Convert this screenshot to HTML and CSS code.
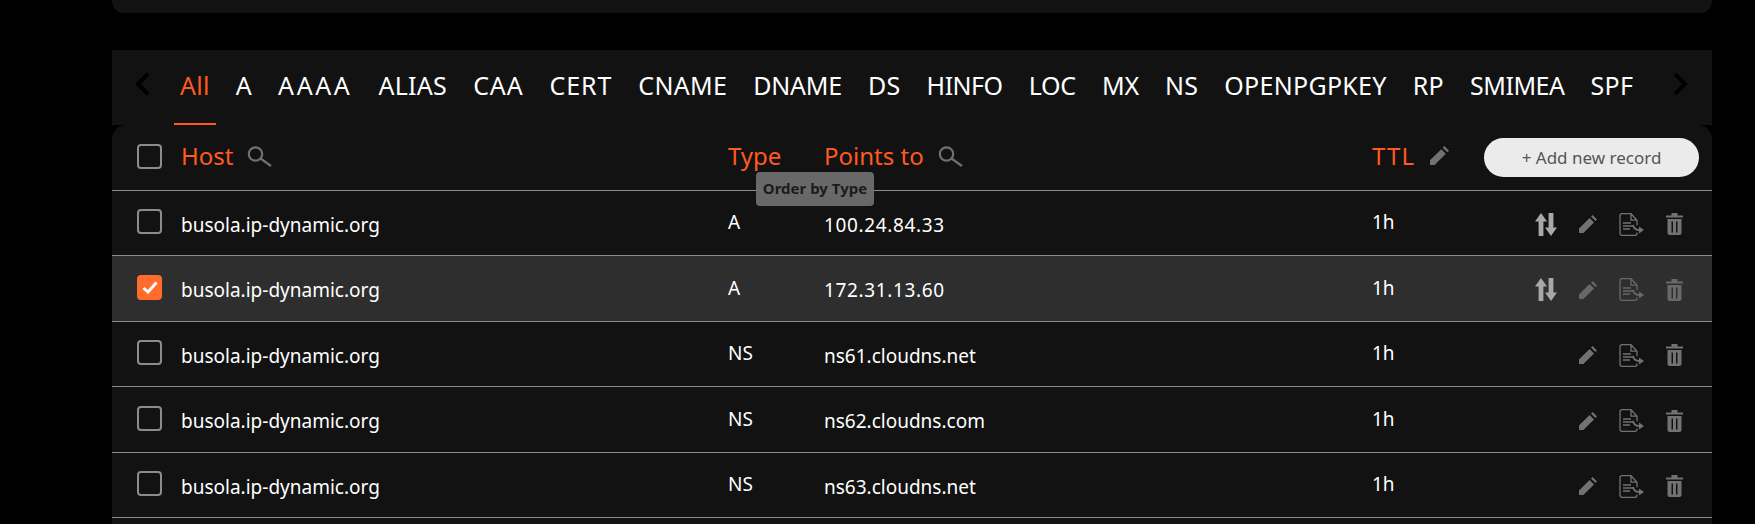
FILE: index.html
```html
<!DOCTYPE html>
<html lang="en">
<head>
<meta charset="utf-8">
<title>DNS records</title>
<link rel="stylesheet" href="styles.css">
</head>
<body>
<svg class="defs" width="0" height="0" aria-hidden="true">
  <defs>
    <symbol id="i-search" viewBox="0 0 25 21"><circle cx="8.5" cy="8" r="6.7" fill="none" stroke="currentColor" stroke-width="2.2"/><path d="M13.5 12.5 24 20" fill="none" stroke="currentColor" stroke-width="2.2"/></symbol>
    <symbol id="i-pencil" viewBox="0 0 18 18"><path d="M0 18V13.6L10.6 3l4.4 4.4L4.4 18Z" fill="currentColor"/><path d="M12 1.6 13.6 0 18 4.4l-1.6 1.6Z" fill="currentColor"/></symbol>
    <symbol id="i-swap" viewBox="0 0 22 23"><path d="M6 0l6 8.500H8.400V23H3.600V8.500H0Z" fill="currentColor"/><path d="M16 23l-6-8.500h3.600V0h4.800v14.500H22Z" fill="currentColor"/></symbol>
    <symbol id="i-doc" viewBox="0 0 25 23"><path d="M3 .7h9l6 6.500v5M18 19.500v.800a2 2 0 0 1-2 2H3a2 2 0 0 1-2-2V2.700a2 2 0 0 1 2-2M12 .7v6.500h6" fill="none" stroke="currentColor" stroke-width="1.300"/><path d="M4 10h8M4 13h10M4 16h7" stroke="currentColor" stroke-width="1.300"/><path d="M14 12c1 4 3 5 6 5" fill="none" stroke="currentColor" stroke-width="1.800"/><path d="M20 13.500 25 17l-5 3.500Z" fill="currentColor"/></symbol>
    <symbol id="i-trash" viewBox="0 0 17 22"><path d="M0 2.500h5.500V0h6v2.500H17v2H0Z" fill="currentColor"/><path fill-rule="evenodd" d="M1.500 6h14v14a2 2 0 0 1-2 2h-10a2 2 0 0 1-2-2ZM5.500 8.500v11h1.500v-11ZM10 8.500v11h1.500v-11Z" fill="currentColor"/></symbol>
    <symbol id="i-left" viewBox="0 0 16 24"><path d="M14 2 4 12l10 10" fill="none" stroke="currentColor" stroke-width="4"/></symbol>
    <symbol id="i-right" viewBox="0 0 16 24"><path d="M2 2l10 10L2 22" fill="none" stroke="currentColor" stroke-width="4"/></symbol>
    <symbol id="i-check" viewBox="0 0 16 13"><path d="M1.500 7 6 11 14.500 1.500" fill="none" stroke="currentColor" stroke-width="3"/></symbol>
  </defs>
</svg>

<div class="page">
  <div class="top-card"></div>

  <nav class="tabs">
    <svg class="chev"><use href="#i-left"/></svg>
    <div class="tab-list">
      <a class="tab active">All</a>
      <a class="tab">A</a>
      <a class="tab tab-wide">AAAA</a>
      <a class="tab">ALIAS</a>
      <a class="tab tab-loose">CAA</a>
      <a class="tab tab-loose">CERT</a>
      <a class="tab">CNAME</a>
      <a class="tab tab-tight">DNAME</a>
      <a class="tab">DS</a>
      <a class="tab tab-tighter">HINFO</a>
      <a class="tab tab-tight">LOC</a>
      <a class="tab tab-tight">MX</a>
      <a class="tab">NS</a>
      <a class="tab">OPENPGPKEY</a>
      <a class="tab">RP</a>
      <a class="tab tab-tighter">SMIMEA</a>
      <a class="tab">SPF</a>
    </div>
    <svg class="chev chev-right"><use href="#i-right"/></svg>
  </nav>

  <section class="table">
    <div class="row head">
      <span class="cell-check"><span class="box"></span></span>
      <span class="th">Host <svg class="ic-search"><use href="#i-search"/></svg></span>
      <span class="th">Type</span>
      <span class="th">Points to <svg class="ic-search"><use href="#i-search"/></svg></span>
      <span class="th ttl">TTL <svg class="ic-pen head-pen"><use href="#i-pencil"/></svg></span>
      <span class="cell-actions"><button class="add">+ Add new record</button></span>
    </div>

    <div class="row">
      <span class="cell-check"><span class="box"></span></span>
      <span class="val">busola.ip-dynamic.org</span><span class="raised">A</span><span class="val ip">100.24.84.33</span><span class="raised">1h</span>
      <span class="cell-actions icons"><svg class="ic-swap"><use href="#i-swap"/></svg><svg class="ic-pen"><use href="#i-pencil"/></svg><svg class="ic-doc"><use href="#i-doc"/></svg><svg class="ic-trash"><use href="#i-trash"/></svg></span>
    </div>
    <div class="row selected">
      <span class="cell-check"><span class="box on"><svg class="ic-check"><use href="#i-check"/></svg></span></span>
      <span class="val">busola.ip-dynamic.org</span><span class="raised">A</span><span class="val ip">172.31.13.60</span><span class="raised">1h</span>
      <span class="cell-actions icons"><svg class="ic-swap"><use href="#i-swap"/></svg><svg class="ic-pen"><use href="#i-pencil"/></svg><svg class="ic-doc"><use href="#i-doc"/></svg><svg class="ic-trash"><use href="#i-trash"/></svg></span>
    </div>
    <div class="row">
      <span class="cell-check"><span class="box"></span></span>
      <span class="val">busola.ip-dynamic.org</span><span class="raised">NS</span><span class="val">ns61.cloudns.net</span><span class="raised">1h</span>
      <span class="cell-actions icons"><svg class="ic-pen"><use href="#i-pencil"/></svg><svg class="ic-doc"><use href="#i-doc"/></svg><svg class="ic-trash"><use href="#i-trash"/></svg></span>
    </div>
    <div class="row">
      <span class="cell-check"><span class="box"></span></span>
      <span class="val">busola.ip-dynamic.org</span><span class="raised">NS</span><span class="val">ns62.cloudns.com</span><span class="raised">1h</span>
      <span class="cell-actions icons"><svg class="ic-pen"><use href="#i-pencil"/></svg><svg class="ic-doc"><use href="#i-doc"/></svg><svg class="ic-trash"><use href="#i-trash"/></svg></span>
    </div>
    <div class="row">
      <span class="cell-check"><span class="box"></span></span>
      <span class="val">busola.ip-dynamic.org</span><span class="raised">NS</span><span class="val">ns63.cloudns.net</span><span class="raised">1h</span>
      <span class="cell-actions icons"><svg class="ic-pen"><use href="#i-pencil"/></svg><svg class="ic-doc"><use href="#i-doc"/></svg><svg class="ic-trash"><use href="#i-trash"/></svg></span>
    </div>
    <div class="row tail"></div>

    <div class="tooltip">Order by Type</div>
  </section>
</div>
</body>
</html>
```

FILE: styles.css
```css
* { box-sizing: border-box; }

html, body {
  margin: 0;
  height: 524px;
  overflow: hidden;
  background: #000;
}

body {
  font-family: "Noto Sans", "Open Sans", sans-serif;
  color: #fff;
}

.defs { display: block; height: 0; }

.page {
  width: 1600px;
  margin-left: 112px;
}

.top-card {
  height: 13px;
  background: #121212;
  border-radius: 0 0 12px 12px;
}

.tabs {
  height: 75px;
  margin-top: 37px;
  background: #121212;
  display: flex;
  position: relative;
  padding-left: 22px;
  align-items: flex-start;
}

.chev {
  width: 16px;
  height: 24px;
  margin-top: 22px;
  color: #000;
  flex: none;
}

.chev-right {
  position: absolute;
  left: 1561px;
  top: 0;
}

.tab-list {
  display: flex;
  gap: 26px;
  margin-left: 30px;
}

.tab {
  height: 75px;
  font-size: 25px;
  letter-spacing: 0.3px;
  line-height: 70px;
  position: relative;
  white-space: nowrap;
}

.tab-wide { letter-spacing: 2.6px; }
.tab-loose { letter-spacing: 0.9px; }
.tab-tight { letter-spacing: -0.2px; }
.tab-tighter { letter-spacing: -0.5px; }

.tab.active {
  color: #ff5a1f;
}

.tab.active::after {
  content: "";
  position: absolute;
  left: -6px;
  right: -6px;
  bottom: 0;
  height: 2px;
  background: #ff5a1f;
}

.table {
  position: relative;
  background: #121212;
  border-radius: 14px 14px 0 0;
  height: 420px;
}

.row {
  display: grid;
  grid-template-columns: 69px 547px 96px 548px 112px 228px;
  align-items: center;
  height: 65.5px;
  border-bottom: 1px solid #8a8a8a;
  font-size: 19px;
}

.row.selected {
  background: #2e2e2e;
}

.row.tail {
  border-bottom: 0;
}

.val {
  padding-top: 4px;
}

.ip {
  letter-spacing: 0.65px;
}

.raised {
  padding-bottom: 1px;
}

.cell-check {
  padding-left: 25px;
  padding-bottom: 2px;
  display: flex;
}

.box {
  width: 25px;
  height: 25px;
  border: 2px solid #8c8c8c;
  border-radius: 4px;
  display: flex;
  align-items: center;
  justify-content: center;
}

.box.on {
  background: #ff6c2c;
  border-color: #ff6c2c;
}

.ic-check {
  width: 16px;
  height: 13px;
  color: #fff;
}

.th {
  color: #ff5a1f;
  font-size: 24px;
  display: flex;
  align-items: center;
  gap: 14px;
  padding-bottom: 4px;
  white-space: nowrap;
}

.ttl {
  letter-spacing: 1.2px;
}

.ic-search {
  width: 25px;
  height: 21px;
  color: #707070;
  margin-top: 3px;
}

.ic-pen {
  width: 18px;
  height: 18px;
  color: #727272;
}

.head-pen {
  width: 19px;
  height: 19px;
  margin-left: 1px;
}

.cell-actions {
  display: flex;
  justify-content: flex-end;
  align-items: center;
}

.icons {
  padding-right: 29px;
  padding-top: 3px;
  gap: 22px;
}

.ic-swap {
  width: 22px;
  height: 23px;
  color: #a8a8a8;
}

.ic-doc {
  width: 25px;
  height: 23px;
  color: #727272;
}

.ic-trash {
  width: 17px;
  height: 22px;
  color: #727272;
}

.selected .ic-pen,
.selected .ic-doc,
.selected .ic-trash {
  color: #686868;
}

.add {
  width: 215px;
  height: 39px;
  margin-right: 13px;
  border: 0;
  border-radius: 20px;
  background: #ebebeb;
  color: #555;
  font: 17px "Noto Sans", sans-serif;
}

.tooltip {
  position: absolute;
  left: 644px;
  top: 47px;
  width: 118px;
  height: 34px;
  border-radius: 4px;
  background: rgba(110, 110, 110, 0.95);
  color: #1b1b1b;
  font-size: 15px;
  font-weight: 700;
  line-height: 32px;
  text-align: center;
  white-space: nowrap;
}
```
